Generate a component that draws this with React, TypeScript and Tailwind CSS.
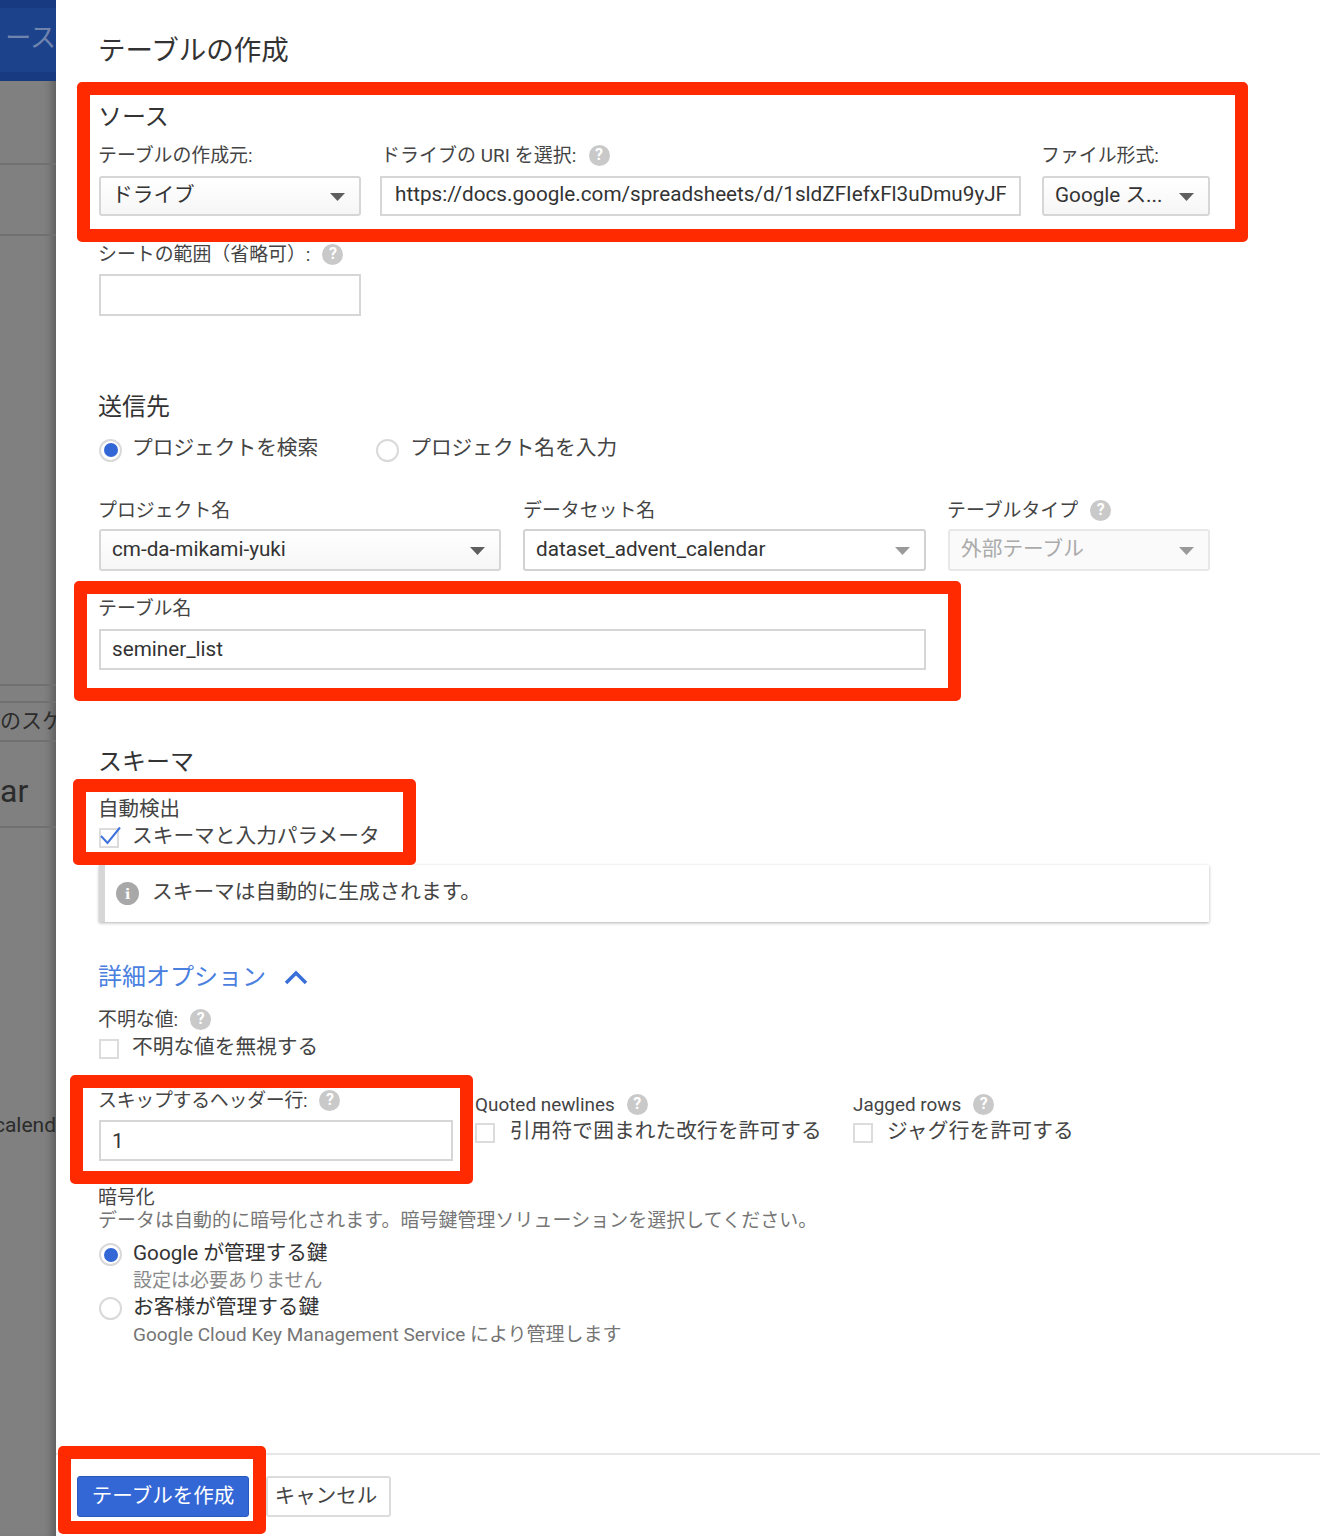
import React from "react";

const font = { fontFamily: '"Roboto","Noto Sans CJK JP",sans-serif' };

function Help({ className = "" }: { className?: string }) {
  return (
    <span className={`inline-flex h-[21px] w-[21px] shrink-0 items-center justify-center rounded-full bg-[#c9c9c9] text-[16px] font-bold leading-none text-white ${className}`}>?</span>
  );
}

function Caret({ light = false }: { light?: boolean }) {
  return (
    <svg width="15" height="8" viewBox="0 0 15 8" className="mt-[2px] shrink-0">
      <path d="M0 0h15L7.5 8z" fill={light ? "#9a9a9a" : "#5f5f5f"} />
    </svg>
  );
}

function Label({ children, help, className = "" }: { children: React.ReactNode; help?: boolean; className?: string }) {
  return (
    <div className={`flex h-6 items-center whitespace-nowrap text-[18.9px] leading-6 text-[#444] ${className}`}>
      <span className="-ml-px pt-[2px]">{children}</span>
      {help && <Help className="ml-3" />}
    </div>
  );
}

function Select({ children, className = "", disabled = false, plain = false }: { children: React.ReactNode; className?: string; disabled?: boolean; plain?: boolean }) {
  const skin = disabled
    ? "border-[#e8e8e8] bg-[#fafafa] text-[#aaa]"
    : plain
      ? "border-[#d2d2d2] bg-white text-[#333]"
      : "border-[#d6d6d6] bg-gradient-to-b from-white to-[#f6f6f6] text-[#333]";
  return (
    <div className={`flex items-center justify-between rounded-[3px] border-2 pl-[11px] pr-[14px] text-[20.7px] ${skin} ${className}`}>
      <span className="whitespace-nowrap">{children}</span>
      <Caret light={disabled || plain} />
    </div>
  );
}

function Input({ children, className = "" }: { children?: React.ReactNode; className?: string }) {
  return (
    <div className={`flex items-center overflow-hidden border-2 border-[#d6d6d6] bg-white pl-[11px] text-[20.7px] text-[#333] ${className}`}>
      <span className="whitespace-nowrap">{children}</span>
    </div>
  );
}

function Radio({ checked = false }: { checked?: boolean }) {
  return (
    <span className="flex h-[23px] w-[23px] shrink-0 items-center justify-center rounded-full border-2 border-[#d9d9d9] bg-white">
      {checked && <span className="h-[14px] w-[14px] rounded-full bg-[#3367d6]" />}
    </span>
  );
}

function Box({ checked = false }: { checked?: boolean }) {
  return (
    <span className="relative mt-[3px] block h-5 w-5 shrink-0 border-2 border-[#dcdcdc] bg-white">
      {checked && (
        <svg width="24" height="20" viewBox="0 0 24 20" className="absolute left-[-2px] top-[-4px]">
          <path d="M2 10l6.5 7L21 1.500" fill="none" stroke="#3f72dc" strokeWidth="2" />
        </svg>
      )}
    </span>
  );
}

function Check({ children, checked = false, className = "", textClass = "" }: { children: React.ReactNode; checked?: boolean; className?: string; textClass?: string }) {
  return (
    <div className={`flex h-[26px] items-center gap-[13px] whitespace-nowrap text-[20.7px] text-[#444] ${className}`}>
      <Box checked={checked} />
      <span className={`pt-[2px] ${textClass}`}>{children}</span>
    </div>
  );
}

function Heading({ children, className = "" }: { children: React.ReactNode; className?: string }) {
  return <div className={`-ml-px h-[30px] text-[24px] leading-[32px] text-[#333] ${className}`}>{children}</div>;
}

function Annot({ className }: { className: string }) {
  return <div className={`absolute rounded-[5px] border-[13px] border-[#ff2a00] ${className}`} />;
}

function Backdrop() {
  return (
    <aside className="relative z-10 flex h-full w-14 shrink-0 flex-col overflow-hidden bg-[#808080] text-[#2b2b2b] shadow-[inset_-10px_0_8px_-6px_rgba(0,0,0,0.28)]">
      <div className="h-2 bg-[#173a80]" />
      <div className="flex h-[64px] items-start justify-end overflow-hidden bg-[#1c428c] pt-4 text-[26px] leading-7 text-[#6f84ad]">
        <span className="whitespace-nowrap">ース</span>
      </div>
      <div className="h-[9px] bg-[#173a80]" />
      <div className="h-[84px] border-b-2 border-[#707070]" />
      <div className="h-[71px] border-b-2 border-[#707070]" />
      <div className="h-[450px] border-b-2 border-[#707070]" />
      <div className="h-[17px] border-b-2 border-[#707070]" />
      <div className="flex h-[39px] items-center border-b-2 border-[#707070] text-[21px]">
        <span className="whitespace-nowrap">のスケジュール</span>
      </div>
      <div className="flex h-[86px] items-center border-b-2 border-[#707070] pt-[14px] text-[32px]">
        <span>ar</span>
      </div>
      <div className="flex h-[708px] items-start justify-end pt-[285px] text-[21px] leading-6">
        <span className="whitespace-nowrap">calend</span>
      </div>
    </aside>
  );
}

export default function App() {
  return (
    <div className="relative flex h-[1536px] w-[1320px] overflow-hidden bg-white" style={font}>
      <Backdrop />
      <main className="flex min-w-0 flex-1 flex-col">
        <div className="flex flex-col pl-[43px] pr-[111px] pt-[29px]">
          <div className="-ml-px h-10 text-[27.500px] leading-[43px] text-[#333]">テーブルの作成</div>
          <Heading className="mt-8">ソース</Heading>

          <div className="mt-3 flex">
            <div className="w-[262px] shrink-0">
              <Label>テーブルの作成元:</Label>
              <Select className="mt-[9px] h-10">ドライブ</Select>
            </div>
            <div className="ml-[19px] w-[641px] shrink-0">
              <Label help className="ml-[2px] tracking-[0.1px]">ドライブの URI を選択:</Label>
              <div className="mt-[9px] flex h-10 items-center overflow-hidden border-2 border-[#d6d6d6] bg-white px-[13px] text-[20.7px] text-[#333]">
                <span className="w-full overflow-hidden whitespace-nowrap pb-[2px]">https://docs.google.com/spreadsheets/d/1sldZFIefxFl3uDmu9yJF</span>
              </div>
            </div>
            <div className="ml-[21px] w-[168px] shrink-0">
              <Label>ファイル形式:</Label>
              <Select className="mt-[9px] h-10">Google ス...</Select>
            </div>
          </div>

          <Label help className="mt-[26px]">シートの範囲（省略可）:</Label>
          <Input className="mt-2 h-[42px] w-[262px]" />

          <Heading className="mt-[75px]">送信先</Heading>
          <div className="mt-[15px] flex h-7 items-center whitespace-nowrap text-[20.7px] text-[#444]">
            <Radio checked />
            <span className="ml-[10px] pb-[2px]">プロジェクトを検索</span>
            <span className="ml-[58px]"><Radio /></span>
            <span className="ml-[11px] pb-[2px]">プロジェクト名を入力</span>
          </div>

          <div className="mt-[34px] flex gap-[22px]">
            <div className="w-[402px] shrink-0">
              <Label>プロジェクト名</Label>
              <Select className="mt-[7px] h-[42px]">cm-da-mikami-yuki</Select>
            </div>
            <div className="w-[403px] shrink-0">
              <Label className="ml-px">データセット名</Label>
              <Select plain className="mt-[7px] h-[42px]">dataset_advent_calendar</Select>
            </div>
            <div className="w-[262px] shrink-0">
              <Label help>テーブルタイプ</Label>
              <Select disabled className="mt-[7px] h-[42px]">外部テーブル</Select>
            </div>
          </div>

          <Label className="mt-[25px]">テーブル名</Label>
          <Input className="mt-[9px] h-[41px] w-[827px]">seminer_list</Input>

          <Heading className="mt-[76px]">スキーマ</Heading>
          <Label className="mt-5 text-[20.5px] text-[#333]">自動検出</Label>
          <Check checked className="mt-[3px]">スキーマと入力パラメータ</Check>

          <div className="mt-4 flex h-[57px] items-center border-l-[6px] border-[#d6d6d6] bg-white pl-[11px] text-[20.7px] text-[#444] shadow-[0_1px_3px_rgba(0,0,0,0.3)]">
            <span className="flex h-[23px] w-[23px] items-center justify-center rounded-full bg-[#a8a8a8] font-serif text-[17px] font-bold leading-none text-white">i</span>
            <span className="ml-[13px] pb-[2px]">スキーマは自動的に生成されます。</span>
          </div>

          <div className="mt-[39px] flex h-8 items-center text-[24px] text-[#4a7fe0]">
            <span className="-ml-px">詳細オプション</span>
            <svg width="24" height="15" viewBox="0 0 24 15" className="ml-[18px]">
              <path d="M2 13L12 3l10 10" fill="none" stroke="#3b6fd8" strokeWidth="3.500" />
            </svg>
          </div>

          <Label help className="mt-[14px]">不明な値:</Label>
          <Check className="mt-[3px]">不明な値を無視する</Check>

          <div className="mt-7 flex">
            <div className="w-[354px] shrink-0">
              <Label help className="tracking-[-0.25px]">スキップするヘッダー行:</Label>
              <Input className="mt-2 h-[41px]"><span className="block pt-[2px]">1</span></Input>
            </div>
            <div className="ml-[22px] w-[356px] shrink-0 pt-[4px]">
              <Label help className="ml-px">Quoted newlines</Label>
              <Check className="mt-[2px]" textClass="ml-[2px] tracking-[0.1px]">引用符で囲まれた改行を許可する</Check>
            </div>
            <div className="ml-[22px] pt-[4px]">
              <Label help className="ml-px">Jagged rows</Label>
              <Check className="mt-[2px]" textClass="ml-[1px] tracking-[0.2px]">ジャグ行を許可する</Check>
            </div>
          </div>

          <Label className="mt-6 h-[23px]">暗号化</Label>
          <Label className="tracking-[0.13px] text-[#757575]">データは自動的に暗号化されます。暗号鍵管理ソリューションを選択してください。</Label>

          <div className="mt-2 flex h-[27px] items-center gap-[11px] text-[20.7px] text-[#333]">
            <span className="mt-[2px]"><Radio checked /></span>
            <span>Google が管理する鍵</span>
          </div>
          <div className="h-[27px] pl-[34px] text-[19px] leading-[27px] text-[#8a8a8a]">設定は必要ありません</div>
          <div className="flex h-[27px] items-center gap-[11px] text-[20.7px] text-[#333]">
            <span className="mt-[2px]"><Radio /></span>
            <span>お客様が管理する鍵</span>
          </div>
          <div className="h-[27px] pl-[34px] text-[19px] leading-[27px] text-[#757575]">Google Cloud Key Management Service により管理します</div>
        </div>

        <footer className="mt-[105px] flex border-t-2 border-[#e6e6e6] pl-[21px] pt-[21px]">
          <button className="h-[41px] w-[172px] rounded-[3px] border border-[#2a58bd] bg-[#3367d6] text-[20.5px] text-white">テーブルを作成</button>
          <button className="ml-[17px] h-[41px] w-[125px] rounded-[3px] border-2 border-[#dcdcdc] bg-white pr-[5px] text-[20.5px] text-[#444]">キャンセル</button>
        </footer>
      </main>

      <Annot className="left-[77px] top-[82px] h-[160px] w-[1171px]" />
      <Annot className="left-[74px] top-[581px] h-[120px] w-[887px]" />
      <Annot className="left-[73px] top-[779px] h-[86px] w-[343px]" />
      <Annot className="left-[70px] top-[1075px] h-[109px] w-[403px]" />
      <Annot className="left-[58px] top-[1446px] h-[88px] w-[208px]" />
    </div>
  );
}
